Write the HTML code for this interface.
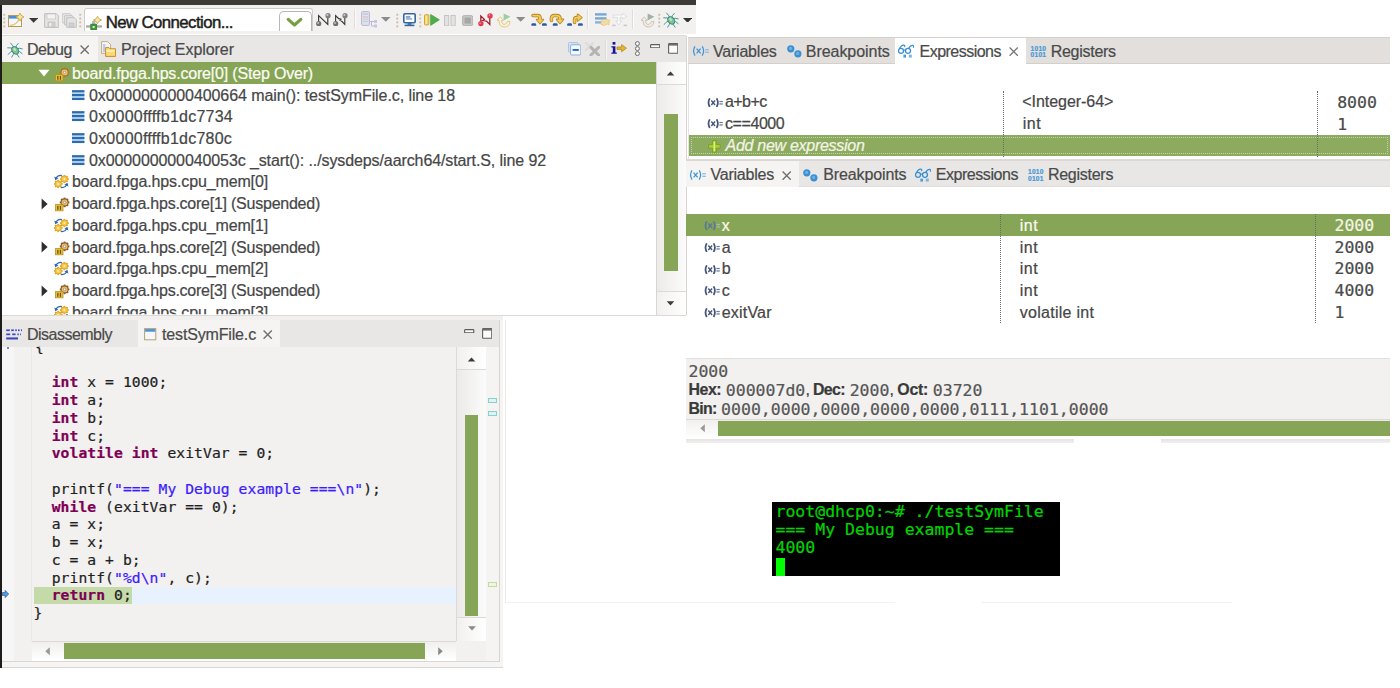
<!DOCTYPE html>
<html><head><meta charset="utf-8"><title>Debug session</title>
<style>
html,body{margin:0;padding:0;background:#fff;}
body{width:1400px;height:688px;position:relative;overflow:hidden;}
#root>div,#root>span,#root>svg{position:absolute;}
#root>span{white-space:pre;-webkit-text-stroke:0.22px;}
.k{color:#7f0055;font-weight:bold;}
.s{color:#3c1cff;}
</style></head><body><div id="root">
<div style="left:0px;top:0px;width:696px;height:4.5px;background:#3c3b37;"></div>
<div style="left:0px;top:4.5px;width:1.6px;height:663px;background:#1c1c1c;"></div>
<div style="left:1.6px;top:4.5px;width:694.4px;height:29.5px;background:#f2f1f0;"></div>
<div style="left:1.6px;top:34.6px;width:684.4px;height:1px;background:#dcd9d6;"></div>
<div style="left:84px;top:8px;width:229px;height:22.5px;background:#ffffff;border:1px solid #d0cecb;border-bottom:none;box-sizing:border-box;border-radius:3px 3px 0 0;"></div>
<div style="left:279px;top:10.5px;width:32.5px;height:20px;background:#ffffff;border:1px solid #b9b7b3;border-bottom:none;box-sizing:border-box;border-radius:5px 5px 0 0;"></div>
<svg style="left:286px;top:17px" width="17" height="11" viewBox="0 0 17 11"><path d="M2.2 2.4 L8.5 8 L14.8 2.4" fill="none" stroke="#76a03c" stroke-width="3.1" stroke-linecap="round" stroke-linejoin="round"/></svg>
<div style="left:1.6px;top:35.6px;width:684.4px;height:26.7px;background:#e9e7e5;"></div>
<div style="left:1.6px;top:35.6px;width:96px;height:26.7px;background:#f5f4f3;"></div>
<div style="left:1.6px;top:62px;width:654px;height:253px;background:#ffffff;"></div>
<div style="left:1.6px;top:62.3px;width:654px;height:21.4px;background:#87a556;"></div>
<div style="left:656px;top:62px;width:29.6px;height:252.8px;background:linear-gradient(to right,#eceae8,#fbfbfb);"></div>
<div style="left:656px;top:62px;width:29.6px;height:23px;background:linear-gradient(to right,#f1f0ee,#ffffff);border-bottom:1px solid #dcdad8;box-sizing:border-box;"></div>
<div style="left:656px;top:291.4px;width:29.6px;height:23.4px;background:linear-gradient(to right,#f1f0ee,#ffffff);border-top:1px solid #dcdad8;box-sizing:border-box;"></div>
<div style="left:655.5px;top:62px;width:1px;height:253px;background:#d8d6d3;"></div>
<div style="left:664.3px;top:113.8px;width:13.4px;height:157px;background:#87a556;"></div>
<svg style="left:666.4px;top:71.4px" width="9" height="5"><path d="M0.7 4.6 L4.5 0.5 L8.3 4.6 Z" fill="#3c3c3c"/></svg>
<svg style="left:666.4px;top:301px" width="9" height="5"><path d="M0.7 0.3 L4.5 4.4 L8.3 0.3 Z" fill="#3c3c3c"/></svg>
<svg style="left:38px;top:69px" width="12" height="8"><path d="M0.5 0.8 L11.5 0.8 L6 7.5 Z" fill="#ffffff"/></svg>
<svg style="left:41px;top:197.8px" width="7" height="12"><path d="M0.6 0.5 L6.6 6 L0.6 11.5 Z" fill="#2e2e2e"/></svg>
<svg style="left:41px;top:241.2px" width="7" height="12"><path d="M0.6 0.5 L6.6 6 L0.6 11.5 Z" fill="#2e2e2e"/></svg>
<svg style="left:41px;top:284.6px" width="7" height="12"><path d="M0.6 0.5 L6.6 6 L0.6 11.5 Z" fill="#2e2e2e"/></svg>
<div style="left:1.6px;top:320.3px;width:498px;height:26.4px;background:#e9e7e5;"></div>
<div style="left:138px;top:320.3px;width:142px;height:26.4px;background:#f5f4f3;"></div>
<div style="left:1.6px;top:346.7px;width:498px;height:314.6px;background:#f2f1f0;"></div>
<div style="left:1.6px;top:346.7px;width:12.4px;height:314.6px;background:#f7f6f6;"></div>
<div style="left:31px;top:346.7px;width:1px;height:294px;background:#e9e8e6;"></div>
<div style="left:456.3px;top:346.7px;width:1px;height:294px;background:#dcdad8;"></div>
<div style="left:34px;top:586.6px;width:422.3px;height:17.4px;background:#e8f2fe;"></div>
<div style="left:34px;top:586.6px;width:98.1px;height:17.4px;background:#c4dba9;"></div>
<div style="left:457.3px;top:346.7px;width:29px;height:294px;background:linear-gradient(to right,#eceae8,#fbfbfb);"></div>
<div style="left:457.3px;top:346.7px;width:29px;height:23.5px;background:linear-gradient(to right,#f1f0ee,#ffffff);border-bottom:1px solid #dcdad8;box-sizing:border-box;"></div>
<div style="left:457.3px;top:616.5px;width:29px;height:24px;background:linear-gradient(to right,#f1f0ee,#ffffff);border-top:1px solid #dcdad8;box-sizing:border-box;"></div>
<div style="left:465px;top:415.2px;width:13px;height:201px;background:#87a556;"></div>
<svg style="left:467.2px;top:356.6px" width="9" height="5"><path d="M0.7 4.6 L4.5 0.5 L8.3 4.6 Z" fill="#3c3c3c"/></svg>
<svg style="left:467.8px;top:626.2px" width="8" height="5"><path d="M0.2 0.2 L4 4.5 L7.8 0.2 Z" fill="#8a8888"/></svg>
<div style="left:486.3px;top:346.7px;width:13.5px;height:314.6px;background:#f5f4f3;"></div>
<div style="left:488.2px;top:398.4px;width:8.8px;height:5px;background:#dff3f3;border:1px solid #84d0d2;box-sizing:border-box;"></div>
<div style="left:488.2px;top:411.2px;width:8.8px;height:5px;background:#dff3f3;border:1px solid #84d0d2;box-sizing:border-box;"></div>
<div style="left:488.2px;top:582.4px;width:8.8px;height:5px;background:#eef6e2;border:1px solid #c2dca6;box-sizing:border-box;"></div>
<div style="left:32px;top:640.5px;width:424.3px;height:20.8px;background:linear-gradient(to bottom,#eceae8,#fbfbfb);border-top:1px solid #dcdad8;box-sizing:border-box;"></div>
<div style="left:32px;top:641.5px;width:31.5px;height:19.8px;background:linear-gradient(to bottom,#f1f0ee,#ffffff);"></div>
<div style="left:425px;top:641.5px;width:31.3px;height:19.8px;background:linear-gradient(to bottom,#f1f0ee,#ffffff);"></div>
<div style="left:64px;top:643px;width:361px;height:15.6px;background:#87a556;"></div>
<svg style="left:45.4px;top:647px" width="5" height="9"><path d="M4.8 0.3 L0.3 4.3 L4.8 8.3 Z" fill="#9a9898"/></svg>
<svg style="left:438.4px;top:647px" width="5" height="9"><path d="M0.2 0.3 L4.7 4.3 L0.2 8.3 Z" fill="#8a8888"/></svg>
<div style="left:499.3px;top:320.3px;width:1px;height:341.5px;background:#d6d3d0;"></div>
<div style="left:500.3px;top:320.3px;width:2.9px;height:347.3px;background:#f6f5f4;"></div>
<div style="left:1.6px;top:661.3px;width:501.6px;height:6.3px;background:#f6f5f4;border-bottom:1.4px solid #d8d5d2;box-sizing:border-box;"></div>
<div style="left:1.6px;top:661.4px;width:498.4px;height:1px;background:#d9d6d3;"></div>
<div style="left:505.3px;top:320px;width:1px;height:282px;background:#ecebea;"></div>
<div style="left:688.3px;top:37.2px;width:701.7px;height:26.8px;background:#e2dfdc;border-top:1px solid #d3d0cc;border-bottom:1px solid #d3d0cc;box-sizing:border-box;"></div>
<div style="left:894.8px;top:37.6px;width:131.2px;height:27px;background:#ffffff;"></div>
<div style="left:685.6px;top:35.6px;width:1px;height:279.2px;background:#d9d3cf;"></div>
<div style="left:688.6px;top:134.6px;width:701.4px;height:21.2px;background:#8dab5f;outline:1px dotted #c4d4aa;outline-offset:-3px;"></div>
<div style="left:1003px;top:91px;width:1px;height:65.5px;background:transparent;border-left:1px dotted #6a6a6a;"></div>
<div style="left:1317.4px;top:91px;width:1px;height:65.5px;background:transparent;border-left:1px dotted #6a6a6a;"></div>
<div style="left:688.2px;top:64px;width:1px;height:95.5px;background:#e6e4e2;"></div>
<div style="left:686px;top:159.2px;width:704px;height:1px;background:#dedbd8;"></div>
<div style="left:686px;top:160px;width:704px;height:27px;background:#e9e7e5;border-top:1px solid #ddd7d4;border-bottom:1px solid #dfdcd9;box-sizing:border-box;"></div>
<div style="left:686px;top:160.6px;width:113.2px;height:26.4px;background:#f5f4f3;"></div>
<div style="left:686px;top:214.3px;width:704px;height:21.3px;background:#87a556;"></div>
<div style="left:1000px;top:214.3px;width:1px;height:109px;background:transparent;border-left:1px dotted #6a6a6a;"></div>
<div style="left:1314.7px;top:214.3px;width:1px;height:109px;background:transparent;border-left:1px dotted #6a6a6a;"></div>
<div style="left:686px;top:358px;width:704px;height:61px;background:#f2f1f0;border-top:1px solid #e2e0de;box-sizing:border-box;"></div>
<div style="left:686px;top:418.5px;width:704px;height:20.5px;background:linear-gradient(to bottom,#eceae8,#ffffff);border-top:1px solid #dcdad8;box-sizing:border-box;"></div>
<div style="left:686px;top:439px;width:388px;height:3.5px;background:linear-gradient(to bottom,#e6e4e2,#f1f0ef);"></div>
<div style="left:1161px;top:439px;width:229px;height:3.5px;background:linear-gradient(to bottom,#e6e4e2,#f1f0ef);"></div>
<div style="left:686px;top:419.5px;width:31.3px;height:19.5px;background:linear-gradient(to bottom,#f1f0ee,#ffffff);"></div>
<div style="left:717.5px;top:421px;width:672.5px;height:15.3px;background:#87a556;"></div>
<svg style="left:699.6px;top:424.4px" width="5" height="9"><path d="M4.8 0.3 L0.3 4.3 L4.8 8.3 Z" fill="#9a9898"/></svg>
<div style="left:772px;top:502px;width:288px;height:74.2px;background:#000000;"></div>
<div style="left:775.5px;top:558.1px;width:9.7px;height:18.1px;background:#00ff00;"></div>
<div style="left:505px;top:601.5px;width:390px;height:1px;background:#f1f1f1;"></div>
<div style="left:981px;top:601.5px;width:251px;height:1px;background:#f1f1f1;"></div>
<svg style="left:3px;top:12.5px" width="3" height="16"><rect x="0.3" y="0.8" width="1.9" height="1.9" fill="#cdbfa6"/><rect x="0.3" y="4.6" width="1.9" height="1.9" fill="#cdbfa6"/><rect x="0.3" y="8.4" width="1.9" height="1.9" fill="#cdbfa6"/><rect x="0.3" y="12.4" width="1.9" height="1.9" fill="#cdbfa6"/></svg>
<svg style="left:8px;top:13px" width="16" height="15" viewBox="0 0 16 15"><rect x="0.5" y="2.5" width="13" height="11" fill="#f4f8fc" stroke="#b89a58" stroke-width="1"/><rect x="1" y="3" width="12" height="2.6" fill="#4a90d8"/><path d="M2 12.5 Q9 12 11.5 5" stroke="#e8c870" stroke-width="1.3" fill="none"/><path d="M12 0 L13.4 2.6 L16 4 L13.4 5.4 L12 8 L10.6 5.4 L8 4 L10.6 2.6 Z" fill="#f6e6a0" stroke="#c8a040" stroke-width="0.8"/></svg>
<svg style="left:28.5px;top:18px" width="9.2" height="4.8"><path d="M0 0 L9.2 0 L4.6 4.8 Z" fill="#3a3a3a"/></svg>
<svg style="left:44px;top:13px" width="15" height="15" viewBox="0 0 15 15"><path d="M0.7 0.7 H12.3 L14.3 2.7 V14.3 H0.7 Z" fill="#e6e6e6" stroke="#bcbcbc" stroke-width="1"/><rect x="3" y="1" width="8.5" height="5" fill="#f4f4f4" stroke="#c4c4c4" stroke-width="0.7"/><rect x="4" y="9" width="7" height="5" fill="#d0d0d0" stroke="#bcbcbc" stroke-width="0.7"/><rect x="5.2" y="10" width="2" height="3.4" fill="#f0f0f0"/></svg>
<svg style="left:62px;top:13px" width="15" height="15" viewBox="0 0 15 15"><path d="M0.7 0.7 H8 L10 2.7 V10 H0.7 Z" fill="#ececec" stroke="#c4c4c4" stroke-width="0.9"/><path d="M2.7 2.7 H10 L12 4.7 V12 H2.7 Z" fill="#e8e8e8" stroke="#c0c0c0" stroke-width="0.9"/><path d="M4.7 4.7 H12.3 L14.3 6.7 V14.3 H4.7 Z" fill="#e4e4e4" stroke="#bcbcbc" stroke-width="0.9"/><rect x="7" y="10" width="5" height="4" fill="#d0d0d0" stroke="#bcbcbc" stroke-width="0.6"/></svg>
<svg style="left:79px;top:12.5px" width="3" height="16"><rect x="0.3" y="0.8" width="1.9" height="1.9" fill="#cdbfa6"/><rect x="0.3" y="4.6" width="1.9" height="1.9" fill="#cdbfa6"/><rect x="0.3" y="8.4" width="1.9" height="1.9" fill="#cdbfa6"/><rect x="0.3" y="12.4" width="1.9" height="1.9" fill="#cdbfa6"/></svg>
<svg style="left:86px;top:15.5px" width="16.5" height="14" viewBox="0 0 16.5 14"><rect x="0" y="9.3" width="16" height="2.3" fill="#a8a8a8"/><rect x="6" y="5" width="3.4" height="5" fill="#b8b8b8"/><rect x="4.8" y="8.2" width="5.6" height="5.4" fill="#3f9a3a" stroke="#2a7a28" stroke-width="0.8"/><rect x="6.6" y="10" width="2" height="2" fill="#d8f0c8"/><path d="M11.5 0.3 L13 2.8 L15.6 4 L13 5.2 L11.5 7.7 L10 5.2 L7.4 4 L10 2.8 Z" fill="#f6e8a8" stroke="#c8a040" stroke-width="0.8"/></svg>
<svg style="left:315.6px;top:12.5px" width="15" height="13.5" viewBox="0 0 15 13.5"><path d="M2.6 10.4 V2.6 L11.8 11.4 V2.4" stroke="#3a3a3a" stroke-width="1.15" fill="none"/><circle cx="2.7" cy="10.7" r="2.6" fill="#707070"/><circle cx="2.1" cy="10" r="1.1" fill="#b8b8b8"/><circle cx="12" cy="2.7" r="2.6" fill="#808080"/><circle cx="11.4" cy="2" r="1.1" fill="#cccccc"/></svg>
<svg style="left:333px;top:12.5px" width="15" height="13.5" viewBox="0 0 15 13.5"><path d="M2.6 10.4 V2.6 L6 6 M8.5 8 L11.8 11.4 V2.4" stroke="#3a3a3a" stroke-width="1.1" fill="none"/><path d="M5.4 5.2 L8.4 6.2 L6.4 7 L9 8.6" stroke="#3a3a3a" stroke-width="0.9" fill="none"/><circle cx="2.7" cy="10.7" r="2.6" fill="#707070"/><circle cx="2.1" cy="10" r="1.1" fill="#b8b8b8"/><circle cx="12" cy="2.7" r="2.6" fill="#808080"/><circle cx="11.4" cy="2" r="1.1" fill="#cccccc"/></svg>
<div style="left:353.5px;top:9px;width:1px;height:20px;background:#e0deda;"></div>
<div style="left:354.5px;top:9px;width:1px;height:20px;background:#fbfaf9;"></div>
<svg style="left:361px;top:10.5px" width="17" height="17" viewBox="0 0 17 17"><rect x="0.6" y="0.6" width="7.8" height="13.8" rx="1" fill="#dfe2ee" stroke="#aeb4cc" stroke-width="0.9"/><rect x="2" y="2" width="5" height="2" fill="#c8cfe2"/><rect x="2" y="5.4" width="5" height="1.2" fill="#e8b8c0"/><rect x="2" y="7.6" width="5" height="1.2" fill="#c0d8d0"/><rect x="2" y="9.8" width="5" height="1.2" fill="#c8cfe2"/><path d="M8.4 10.5 H14 M10.5 10.5 V15 H14" stroke="#b8b8d8" stroke-width="1" fill="none"/><rect x="13" y="9" width="3" height="3" fill="#c8c4e4"/><rect x="13" y="13.5" width="3" height="3" fill="#c8c4e4"/></svg>
<svg style="left:381.4px;top:17.2px" width="9.6" height="4.8"><path d="M0 0 L9.6 0 L4.8 4.8 Z" fill="#8c8c8c"/></svg>
<svg style="left:396.3px;top:12.5px" width="3" height="16"><rect x="0.3" y="0.8" width="1.9" height="1.9" fill="#cdbfa6"/><rect x="0.3" y="4.6" width="1.9" height="1.9" fill="#cdbfa6"/><rect x="0.3" y="8.4" width="1.9" height="1.9" fill="#cdbfa6"/><rect x="0.3" y="12.4" width="1.9" height="1.9" fill="#cdbfa6"/></svg>
<svg style="left:403px;top:12.5px" width="13" height="14" viewBox="0 0 13 14"><rect x="0.8" y="0.8" width="11.4" height="9" rx="1.2" fill="#ffffff" stroke="#3465a4" stroke-width="1.6"/><rect x="2.8" y="3.4" width="4.6" height="1.1" fill="#3465a4"/><rect x="2.8" y="5.4" width="6.4" height="1.1" fill="#5a86c0"/><rect x="4.6" y="10.2" width="3.8" height="1.6" fill="#3465a4"/><rect x="1.6" y="11.6" width="9.8" height="1.6" fill="#3465a4"/></svg>
<svg style="left:419.3px;top:12.5px" width="3" height="16"><rect x="0.3" y="0.8" width="1.9" height="1.9" fill="#cdbfa6"/><rect x="0.3" y="4.6" width="1.9" height="1.9" fill="#cdbfa6"/><rect x="0.3" y="8.4" width="1.9" height="1.9" fill="#cdbfa6"/><rect x="0.3" y="12.4" width="1.9" height="1.9" fill="#cdbfa6"/></svg>
<svg style="left:424.4px;top:14.3px" width="16" height="12" viewBox="0 0 16 12"><rect x="0.5" y="0.7" width="4.4" height="10.2" rx="0.8" fill="#f2d060" stroke="#c8a030" stroke-width="0.9"/><rect x="1.6" y="1.8" width="1.3" height="8" fill="#faeaa0"/><path d="M6.6 0.4 L15.4 5.8 L6.6 11.4 Z" fill="#4cae4c" stroke="#3a943a" stroke-width="0.6"/></svg>
<svg style="left:444px;top:14.6px" width="12" height="11.5" viewBox="0 0 12 11.5"><rect x="0.5" y="0.5" width="4.2" height="10.4" fill="#e2e2e2" stroke="#c2c2c2" stroke-width="0.9"/><rect x="7" y="0.5" width="4.2" height="10.4" fill="#e2e2e2" stroke="#c2c2c2" stroke-width="0.9"/></svg>
<svg style="left:462px;top:14.8px" width="11.4" height="11.2" viewBox="0 0 11.4 11.2"><rect x="0.6" y="0.6" width="10.2" height="10" rx="1.6" fill="#c6c6c6" stroke="#b2b2b2" stroke-width="1"/><rect x="2.6" y="2.6" width="6.2" height="6" fill="#a6a6a6"/></svg>
<svg style="left:477.8px;top:13px" width="15" height="13.6" viewBox="0 0 15 13.6"><path d="M2.8 10.6 V3 L6.4 6.4 L5 7.4 L8.4 8 L11.8 11.4 V2.6" stroke="#a02030" stroke-width="1.3" fill="none"/><circle cx="2.9" cy="10.6" r="2.7" fill="#e6394f"/><circle cx="12" cy="2.9" r="2.7" fill="#e6394f"/><circle cx="2.2" cy="10.2" r="0.8" fill="#f8a0a8"/><circle cx="11.4" cy="2.1" r="0.8" fill="#f8a0a8"/></svg>
<svg style="left:496px;top:12.6px" width="15.5" height="15.2" viewBox="0 0 15.5 15.2"><path d="M1 7.2 L4.3 4 L7.6 7.2 H5.6 Q5.6 11.4 8.2 11.4 Q11.2 11.4 11.4 8.4 L14 8.4 Q13.6 14 8.2 14 Q3 14 3 7.2 Z" fill="#fcf4dc" stroke="#e2c27c" stroke-width="0.9"/><path d="M7.6 0.4 L14.4 3.8 L7.6 7.4 Z" fill="#98d0a0"/></svg>
<svg style="left:516.2px;top:17.4px" width="9.4" height="4.8"><path d="M0 0 L9.4 0 L4.7 4.8 Z" fill="#8c8c8c"/></svg>
<svg style="left:531px;top:13.4px" width="16.4" height="13" viewBox="0 0 16.4 13"><path d="M2 2.6 H6.6 Q9 2.6 9 5 V7" stroke="#b8841c" stroke-width="3.5" fill="none" stroke-linecap="round" stroke-linejoin="round"/><path d="M5.6 6.6 H12.4 L9 10.6 Z" fill="#b8841c" stroke="#b8841c" stroke-width="1.6" stroke-linejoin="round"/><path d="M2 2.6 H6.6 Q9 2.6 9 5 V7" stroke="#f0cc5c" stroke-width="1.9" fill="none" stroke-linecap="round" stroke-linejoin="round"/><path d="M5.6 6.6 H12.4 L9 10.6 Z" fill="#f0cc5c"/><path d="M0.4 12.8 V11.6 Q0.4 10.2 1.7999999999999998 10.2 H3.8 Q5.2 10.2 5.2 11.6 V12.8 Z" fill="#2a5aa4"/><path d="M11 12.8 V11.6 Q11 10.2 12.4 10.2 H14.4 Q15.8 10.2 15.8 11.6 V12.8 Z" fill="#2a5aa4"/></svg>
<svg style="left:549px;top:13.4px" width="16.4" height="13" viewBox="0 0 16.4 13"><path d="M2.4 7.6 V5.6 Q2.4 2.6 5.4 2.6 H7.6 Q11 2.6 11 5.6 V6.6" stroke="#b8841c" stroke-width="3.5" fill="none" stroke-linecap="round" stroke-linejoin="round"/><path d="M7.6 6.4 H14.4 L11 10.4 Z" fill="#b8841c" stroke="#b8841c" stroke-width="1.6" stroke-linejoin="round"/><path d="M2.4 7.6 V5.6 Q2.4 2.6 5.4 2.6 H7.6 Q11 2.6 11 5.6 V6.6" stroke="#f0cc5c" stroke-width="1.9" fill="none" stroke-linecap="round" stroke-linejoin="round"/><path d="M7.6 6.4 H14.4 L11 10.4 Z" fill="#f0cc5c"/><path d="M3.8 12.8 V11.6 Q3.8 10.2 5.199999999999999 10.2 H7.199999999999999 Q8.6 10.2 8.6 11.6 V12.8 Z" fill="#2a5aa4"/></svg>
<svg style="left:566.6px;top:13.4px" width="16.4" height="13" viewBox="0 0 16.4 13"><path d="M7.6 9.4 V6.6 Q7.6 4.6 9.6 4.6 H11" stroke="#b8841c" stroke-width="3.5" fill="none" stroke-linecap="round" stroke-linejoin="round"/><path d="M10.6 1.2 L14.8 4.6 L10.6 8 Z" fill="#b8841c" stroke="#b8841c" stroke-width="1.6" stroke-linejoin="round"/><path d="M7.6 9.4 V6.6 Q7.6 4.6 9.6 4.6 H11" stroke="#f0cc5c" stroke-width="1.9" fill="none" stroke-linecap="round" stroke-linejoin="round"/><path d="M10.6 1.2 L14.8 4.6 L10.6 8 Z" fill="#f0cc5c"/><path d="M0.2 12.8 V11.6 Q0.2 10.2 1.5999999999999999 10.2 H3.6 Q5.0 10.2 5.0 11.6 V12.8 Z" fill="#2a5aa4"/><path d="M11 12.8 V11.6 Q11 10.2 12.4 10.2 H14.4 Q15.8 10.2 15.8 11.6 V12.8 Z" fill="#2a5aa4"/></svg>
<div style="left:587px;top:9px;width:1px;height:20px;background:#e0deda;"></div>
<div style="left:588px;top:9px;width:1px;height:20px;background:#fbfaf9;"></div>
<svg style="left:595px;top:12.8px" width="15.4" height="14.6" viewBox="0 0 15.4 14.6"><rect x="0" y="0.2" width="11.6" height="2.4" fill="#7aa6d4"/><rect x="0" y="4.2" width="11.6" height="2.4" fill="#7aa6d4"/><rect x="0" y="8.2" width="6.6" height="2.4" fill="#8ab2dc"/><path d="M6.4 7.4 Q9 9.6 10.6 7 L9.8 6 L14.6 7.2 L13.6 12.2 L12.6 10.8 Q9.6 14 6 11.4 Z" fill="#f6dca0" stroke="#e4c078" stroke-width="0.7"/></svg>
<svg style="left:611.6px;top:13px" width="16.4" height="14" viewBox="0 0 16.4 14"><path d="M1 2 H10.6 V0.4 L15 3.2 L10.6 6 V4.4 H8 V8.4 H9.6 L6.8 12 L4 8.4 H5.6 V4.4 H1 Z" fill="#fafafa" stroke="#d8d8d8" stroke-width="0.8"/><rect x="0.2" y="11.6" width="3.4" height="1.6" fill="#c8c8c8"/><rect x="11.6" y="11.6" width="3.4" height="1.6" fill="#c8c8c8"/></svg>
<div style="left:632.2px;top:9px;width:1px;height:20px;background:#e0deda;"></div>
<div style="left:633.2px;top:9px;width:1px;height:20px;background:#fbfaf9;"></div>
<svg style="left:640px;top:12.6px" width="15.5" height="15.2" viewBox="0 0 15.5 15.2"><path d="M1 7.2 L4.3 4 L7.6 7.2 H5.6 Q5.6 11.4 8.2 11.4 Q11.2 11.4 11.4 8.4 L14 8.4 Q13.6 14 8.2 14 Q3 14 3 7.2 Z" fill="#f0ece4" stroke="#c8c0b0" stroke-width="0.9"/><path d="M7.6 0.4 L14.4 3.8 L7.6 7.4 Z" fill="#9cb4a4"/></svg>
<svg style="left:657.5px;top:12.5px" width="3" height="16"><rect x="0.3" y="0.8" width="1.9" height="1.9" fill="#cdbfa6"/><rect x="0.3" y="4.6" width="1.9" height="1.9" fill="#cdbfa6"/><rect x="0.3" y="8.4" width="1.9" height="1.9" fill="#cdbfa6"/><rect x="0.3" y="12.4" width="1.9" height="1.9" fill="#cdbfa6"/></svg>
<svg style="left:662.6px;top:12.4px" width="16.0" height="16.0" viewBox="0 0 16 16"><path d="M8 8 L3.86 5.93 L0.70 5.81" stroke="#3a8c86" stroke-width="1.0" stroke-linecap="round" fill="none" opacity="0.9"/><path d="M8 8 L5.93 3.86 L3.62 1.07" stroke="#3a8c86" stroke-width="1.0" stroke-linecap="round" fill="none" opacity="0.9"/><path d="M8 8 L9.38 3.63 L11.29 1.43" stroke="#3a8c86" stroke-width="1.0" stroke-linecap="round" fill="none" opacity="0.9"/><path d="M8 8 L12.14 6.16 L15.30 6.91" stroke="#3a8c86" stroke-width="1.0" stroke-linecap="round" fill="none" opacity="0.9"/><path d="M8 8 L12.37 9.38 L15.15 11.65" stroke="#3a8c86" stroke-width="1.0" stroke-linecap="round" fill="none" opacity="0.9"/><path d="M8 8 L10.07 12.14 L12.02 15.15" stroke="#3a8c86" stroke-width="1.0" stroke-linecap="round" fill="none" opacity="0.9"/><path d="M8 8 L6.39 12.37 L4.71 15.15" stroke="#3a8c86" stroke-width="1.0" stroke-linecap="round" fill="none" opacity="0.9"/><path d="M8 8 L3.86 9.84 L1.07 12.38" stroke="#3a8c86" stroke-width="1.0" stroke-linecap="round" fill="none" opacity="0.9"/><ellipse cx="8.2" cy="8.4" rx="3.6" ry="4.6" transform="rotate(-38 8.2 8.4)" fill="#2c8896"/><ellipse cx="8.2" cy="8.4" rx="2.6" ry="3.6" transform="rotate(-38 8.2 8.4)" fill="#86c486"/><ellipse cx="7.6" cy="7.4" rx="1.1" ry="1.7" transform="rotate(-38 7.6 7.4)" fill="#c4e6be"/></svg>
<svg style="left:683.2px;top:17.7px" width="9.2" height="4.8"><path d="M0 0 L9.2 0 L4.6 4.8 Z" fill="#333"/></svg>
<svg style="left:6.8px;top:42px" width="16.0" height="16.0" viewBox="0 0 16 16"><path d="M8 8 L3.86 5.93 L0.70 5.81" stroke="#3a8c86" stroke-width="1.0" stroke-linecap="round" fill="none" opacity="0.9"/><path d="M8 8 L5.93 3.86 L3.62 1.07" stroke="#3a8c86" stroke-width="1.0" stroke-linecap="round" fill="none" opacity="0.9"/><path d="M8 8 L9.38 3.63 L11.29 1.43" stroke="#3a8c86" stroke-width="1.0" stroke-linecap="round" fill="none" opacity="0.9"/><path d="M8 8 L12.14 6.16 L15.30 6.91" stroke="#3a8c86" stroke-width="1.0" stroke-linecap="round" fill="none" opacity="0.9"/><path d="M8 8 L12.37 9.38 L15.15 11.65" stroke="#3a8c86" stroke-width="1.0" stroke-linecap="round" fill="none" opacity="0.9"/><path d="M8 8 L10.07 12.14 L12.02 15.15" stroke="#3a8c86" stroke-width="1.0" stroke-linecap="round" fill="none" opacity="0.9"/><path d="M8 8 L6.39 12.37 L4.71 15.15" stroke="#3a8c86" stroke-width="1.0" stroke-linecap="round" fill="none" opacity="0.9"/><path d="M8 8 L3.86 9.84 L1.07 12.38" stroke="#3a8c86" stroke-width="1.0" stroke-linecap="round" fill="none" opacity="0.9"/><ellipse cx="8.2" cy="8.4" rx="3.6" ry="4.6" transform="rotate(-38 8.2 8.4)" fill="#2c8896"/><ellipse cx="8.2" cy="8.4" rx="2.6" ry="3.6" transform="rotate(-38 8.2 8.4)" fill="#86c486"/><ellipse cx="7.6" cy="7.4" rx="1.1" ry="1.7" transform="rotate(-38 7.6 7.4)" fill="#c4e6be"/></svg>
<svg style="left:80px;top:45.2px" width="9.4" height="9.4"><path d="M0.6 0.6 L8.8 8.8 M8.8 0.6 L0.6 8.8" stroke="#6f6f6f" stroke-width="1.35" fill="none"/></svg>
<svg style="left:101px;top:41px" width="15.4" height="16" viewBox="0 0 15.4 16"><path d="M0.6 0.6 H6.6 L9.6 3.6 V12.4 H0.6 Z" fill="#f4f6fc" stroke="#c4ae72" stroke-width="1"/><rect x="2" y="3" width="2.4" height="8" fill="#b8ccf0"/><path d="M4.6 6.6 H8 L9 7.8 H14.6 V15.4 H4.6 Z" fill="#fcd870" stroke="#c88a30" stroke-width="1"/><rect x="5.4" y="8.6" width="8.4" height="2.4" fill="#fff0a8"/></svg>
<svg style="left:568px;top:42px" width="13.4" height="13.6" viewBox="0 0 13.4 13.6"><rect x="0.5" y="0.5" width="9.6" height="9.6" rx="1" fill="#cfe0f4" stroke="#a8c4e4" stroke-width="0.9"/><rect x="2.6" y="2.8" width="10.2" height="10.2" rx="1" fill="#f4f8fd" stroke="#8ab0dc" stroke-width="1"/><rect x="4.6" y="7" width="6.2" height="1.9" fill="#2a68b4"/></svg>
<svg style="left:585px;top:41.6px" width="15.4" height="14.4" viewBox="0 0 15.4 14.4"><path d="M1 1 L8 8 M8 1 L1 8" stroke="#dcdcdc" stroke-width="2.4" stroke-linecap="round"/><path d="M6 5.4 L13.6 13 M13.6 5.4 L6 13" stroke="#b4b4b4" stroke-width="3" stroke-linecap="round"/></svg>
<div style="left:605.3px;top:39.5px;width:1px;height:20px;background:#dedcd9;"></div>
<div style="left:606.3px;top:39.5px;width:1px;height:20px;background:#f6f5f4;"></div>
<svg style="left:611.4px;top:42px" width="16" height="12.4" viewBox="0 0 16 12.4"><rect x="1.6" y="0" width="2.8" height="2.6" fill="#14149c"/><path d="M0.4 4.2 H4.4 V10.4 H5.8 V11.8 H0.4 V10.4 H1.8 V5.6 H0.4 Z" fill="#14149c"/><path d="M6 5 H10.6 V2.6 L15.4 6.2 L10.6 9.8 V7.4 H6 Z" fill="#e4b828" stroke="#a8801c" stroke-width="0.7"/></svg>
<svg style="left:634.2px;top:41.2px" width="7" height="15.4" viewBox="0 0 7 15.4"><circle cx="3.4" cy="2.6" r="2" fill="#f4f4f4" stroke="#6c6c6c" stroke-width="1"/><circle cx="3.4" cy="7.6" r="2" fill="#f4f4f4" stroke="#6c6c6c" stroke-width="1"/><circle cx="3.4" cy="12.6" r="2" fill="#f4f4f4" stroke="#6c6c6c" stroke-width="1"/></svg>
<svg style="left:650px;top:43.8px" width="10.4" height="4.4" viewBox="0 0 10.4 4.4"><rect x="0.6" y="0.6" width="9.2" height="3.2" rx="0.6" fill="#fbfbfb" stroke="#5c5c5c" stroke-width="1.1"/></svg>
<svg style="left:667.8px;top:43.0px" width="10.4" height="10.8" viewBox="0 0 10.4 10.8"><rect x="0.6" y="0.6" width="9.2" height="9.6" rx="0.6" fill="#fbfbfb" stroke="#5c5c5c" stroke-width="1.1"/><rect x="0.6" y="0.6" width="9.2" height="2" fill="#6c6c6c"/></svg>
<svg style="left:464.2px;top:328.79999999999995px" width="10.4" height="4.4" viewBox="0 0 10.4 4.4"><rect x="0.6" y="0.6" width="9.2" height="3.2" rx="0.6" fill="#fbfbfb" stroke="#5c5c5c" stroke-width="1.1"/></svg>
<svg style="left:482.0px;top:328.0px" width="10.4" height="10.8" viewBox="0 0 10.4 10.8"><rect x="0.6" y="0.6" width="9.2" height="9.6" rx="0.6" fill="#fbfbfb" stroke="#5c5c5c" stroke-width="1.1"/><rect x="0.6" y="0.6" width="9.2" height="2" fill="#6c6c6c"/></svg>
<svg style="left:54.6px;top:67.0px" width="15" height="15" viewBox="0 0 15 15"><g transform="translate(9.6 5.4)"><rect x="-0.9" y="-4.8" width="1.8" height="1.8" fill="#a87828" transform="rotate(0)"/><rect x="-0.9" y="-4.8" width="1.8" height="1.8" fill="#a87828" transform="rotate(45)"/><rect x="-0.9" y="-4.8" width="1.8" height="1.8" fill="#a87828" transform="rotate(90)"/><rect x="-0.9" y="-4.8" width="1.8" height="1.8" fill="#a87828" transform="rotate(135)"/><rect x="-0.9" y="-4.8" width="1.8" height="1.8" fill="#a87828" transform="rotate(180)"/><rect x="-0.9" y="-4.8" width="1.8" height="1.8" fill="#a87828" transform="rotate(225)"/><rect x="-0.9" y="-4.8" width="1.8" height="1.8" fill="#a87828" transform="rotate(270)"/><rect x="-0.9" y="-4.8" width="1.8" height="1.8" fill="#a87828" transform="rotate(315)"/><circle r="3.5" fill="#f0c868" stroke="#a87828" stroke-width="1.1"/><circle r="1.3" fill="#f8f0e0" stroke="#7a6a8a" stroke-width="0.6"/></g><rect x="0.4" y="7.6" width="7.6" height="6.2" fill="#ecc23c" stroke="#b8901c" stroke-width="0.8"/><rect x="2.2" y="8.8" width="1.3" height="4" fill="#6e5410"/><rect x="4.8" y="8.8" width="1.3" height="4" fill="#6e5410"/></svg>
<svg style="left:72.4px;top:89.61px" width="13" height="11"><rect x="0" y="0" width="12.4" height="10.2" fill="#b8d4ee"/><rect x="0" y="0.2" width="12.4" height="2.1" fill="#2c6cac"/><rect x="0" y="4" width="12.4" height="2.1" fill="#2c6cac"/><rect x="0" y="7.9" width="12.4" height="2.1" fill="#2c6cac"/></svg>
<svg style="left:72.4px;top:111.32000000000001px" width="13" height="11"><rect x="0" y="0" width="12.4" height="10.2" fill="#b8d4ee"/><rect x="0" y="0.2" width="12.4" height="2.1" fill="#2c6cac"/><rect x="0" y="4" width="12.4" height="2.1" fill="#2c6cac"/><rect x="0" y="7.9" width="12.4" height="2.1" fill="#2c6cac"/></svg>
<svg style="left:72.4px;top:133.03px" width="13" height="11"><rect x="0" y="0" width="12.4" height="10.2" fill="#b8d4ee"/><rect x="0" y="0.2" width="12.4" height="2.1" fill="#2c6cac"/><rect x="0" y="4" width="12.4" height="2.1" fill="#2c6cac"/><rect x="0" y="7.9" width="12.4" height="2.1" fill="#2c6cac"/></svg>
<svg style="left:72.4px;top:154.74px" width="13" height="11"><rect x="0" y="0" width="12.4" height="10.2" fill="#b8d4ee"/><rect x="0" y="0.2" width="12.4" height="2.1" fill="#2c6cac"/><rect x="0" y="4" width="12.4" height="2.1" fill="#2c6cac"/><rect x="0" y="7.9" width="12.4" height="2.1" fill="#2c6cac"/></svg>
<svg style="left:54.4px;top:174.35000000000002px" width="15" height="15" viewBox="0 0 15 16" preserveAspectRatio="none"><path d="M1.6 5.4 Q3.4 1 8 1.6" stroke="#2a6ab4" stroke-width="1.3" fill="none"/><path d="M0.4 2.6 L1.2 6.6 L4.4 4.8 Z" fill="#2a6ab4"/><path d="M13 10.6 Q11.6 15 6.8 14.4" stroke="#2a6ab4" stroke-width="1.3" fill="none"/><path d="M14.4 13.4 L13.4 9.4 L10.4 11.4 Z" fill="#2a6ab4"/><g transform="translate(10.4 5.4)"><rect x="-0.9" y="-4.4" width="1.8" height="1.8" fill="#dca428" transform="rotate(0)"/><rect x="-0.9" y="-4.4" width="1.8" height="1.8" fill="#dca428" transform="rotate(45)"/><rect x="-0.9" y="-4.4" width="1.8" height="1.8" fill="#dca428" transform="rotate(90)"/><rect x="-0.9" y="-4.4" width="1.8" height="1.8" fill="#dca428" transform="rotate(135)"/><rect x="-0.9" y="-4.4" width="1.8" height="1.8" fill="#dca428" transform="rotate(180)"/><rect x="-0.9" y="-4.4" width="1.8" height="1.8" fill="#dca428" transform="rotate(225)"/><rect x="-0.9" y="-4.4" width="1.8" height="1.8" fill="#dca428" transform="rotate(270)"/><rect x="-0.9" y="-4.4" width="1.8" height="1.8" fill="#dca428" transform="rotate(315)"/><circle r="3.2" fill="#f6c84c" stroke="#dca428" stroke-width="0.9"/><circle r="1.1" fill="#fdeeb0"/></g><g transform="translate(4.2 10.6)"><rect x="-0.9" y="-4.4" width="1.8" height="1.8" fill="#dca428" transform="rotate(0)"/><rect x="-0.9" y="-4.4" width="1.8" height="1.8" fill="#dca428" transform="rotate(45)"/><rect x="-0.9" y="-4.4" width="1.8" height="1.8" fill="#dca428" transform="rotate(90)"/><rect x="-0.9" y="-4.4" width="1.8" height="1.8" fill="#dca428" transform="rotate(135)"/><rect x="-0.9" y="-4.4" width="1.8" height="1.8" fill="#dca428" transform="rotate(180)"/><rect x="-0.9" y="-4.4" width="1.8" height="1.8" fill="#dca428" transform="rotate(225)"/><rect x="-0.9" y="-4.4" width="1.8" height="1.8" fill="#dca428" transform="rotate(270)"/><rect x="-0.9" y="-4.4" width="1.8" height="1.8" fill="#dca428" transform="rotate(315)"/><circle r="3.2" fill="#f6c84c" stroke="#dca428" stroke-width="0.9"/><circle r="1.1" fill="#fdeeb0"/></g></svg>
<svg style="left:54.4px;top:217.77px" width="15" height="15" viewBox="0 0 15 16" preserveAspectRatio="none"><path d="M1.6 5.4 Q3.4 1 8 1.6" stroke="#2a6ab4" stroke-width="1.3" fill="none"/><path d="M0.4 2.6 L1.2 6.6 L4.4 4.8 Z" fill="#2a6ab4"/><path d="M13 10.6 Q11.6 15 6.8 14.4" stroke="#2a6ab4" stroke-width="1.3" fill="none"/><path d="M14.4 13.4 L13.4 9.4 L10.4 11.4 Z" fill="#2a6ab4"/><g transform="translate(10.4 5.4)"><rect x="-0.9" y="-4.4" width="1.8" height="1.8" fill="#dca428" transform="rotate(0)"/><rect x="-0.9" y="-4.4" width="1.8" height="1.8" fill="#dca428" transform="rotate(45)"/><rect x="-0.9" y="-4.4" width="1.8" height="1.8" fill="#dca428" transform="rotate(90)"/><rect x="-0.9" y="-4.4" width="1.8" height="1.8" fill="#dca428" transform="rotate(135)"/><rect x="-0.9" y="-4.4" width="1.8" height="1.8" fill="#dca428" transform="rotate(180)"/><rect x="-0.9" y="-4.4" width="1.8" height="1.8" fill="#dca428" transform="rotate(225)"/><rect x="-0.9" y="-4.4" width="1.8" height="1.8" fill="#dca428" transform="rotate(270)"/><rect x="-0.9" y="-4.4" width="1.8" height="1.8" fill="#dca428" transform="rotate(315)"/><circle r="3.2" fill="#f6c84c" stroke="#dca428" stroke-width="0.9"/><circle r="1.1" fill="#fdeeb0"/></g><g transform="translate(4.2 10.6)"><rect x="-0.9" y="-4.4" width="1.8" height="1.8" fill="#dca428" transform="rotate(0)"/><rect x="-0.9" y="-4.4" width="1.8" height="1.8" fill="#dca428" transform="rotate(45)"/><rect x="-0.9" y="-4.4" width="1.8" height="1.8" fill="#dca428" transform="rotate(90)"/><rect x="-0.9" y="-4.4" width="1.8" height="1.8" fill="#dca428" transform="rotate(135)"/><rect x="-0.9" y="-4.4" width="1.8" height="1.8" fill="#dca428" transform="rotate(180)"/><rect x="-0.9" y="-4.4" width="1.8" height="1.8" fill="#dca428" transform="rotate(225)"/><rect x="-0.9" y="-4.4" width="1.8" height="1.8" fill="#dca428" transform="rotate(270)"/><rect x="-0.9" y="-4.4" width="1.8" height="1.8" fill="#dca428" transform="rotate(315)"/><circle r="3.2" fill="#f6c84c" stroke="#dca428" stroke-width="0.9"/><circle r="1.1" fill="#fdeeb0"/></g></svg>
<svg style="left:54.4px;top:261.19px" width="15" height="15" viewBox="0 0 15 16" preserveAspectRatio="none"><path d="M1.6 5.4 Q3.4 1 8 1.6" stroke="#2a6ab4" stroke-width="1.3" fill="none"/><path d="M0.4 2.6 L1.2 6.6 L4.4 4.8 Z" fill="#2a6ab4"/><path d="M13 10.6 Q11.6 15 6.8 14.4" stroke="#2a6ab4" stroke-width="1.3" fill="none"/><path d="M14.4 13.4 L13.4 9.4 L10.4 11.4 Z" fill="#2a6ab4"/><g transform="translate(10.4 5.4)"><rect x="-0.9" y="-4.4" width="1.8" height="1.8" fill="#dca428" transform="rotate(0)"/><rect x="-0.9" y="-4.4" width="1.8" height="1.8" fill="#dca428" transform="rotate(45)"/><rect x="-0.9" y="-4.4" width="1.8" height="1.8" fill="#dca428" transform="rotate(90)"/><rect x="-0.9" y="-4.4" width="1.8" height="1.8" fill="#dca428" transform="rotate(135)"/><rect x="-0.9" y="-4.4" width="1.8" height="1.8" fill="#dca428" transform="rotate(180)"/><rect x="-0.9" y="-4.4" width="1.8" height="1.8" fill="#dca428" transform="rotate(225)"/><rect x="-0.9" y="-4.4" width="1.8" height="1.8" fill="#dca428" transform="rotate(270)"/><rect x="-0.9" y="-4.4" width="1.8" height="1.8" fill="#dca428" transform="rotate(315)"/><circle r="3.2" fill="#f6c84c" stroke="#dca428" stroke-width="0.9"/><circle r="1.1" fill="#fdeeb0"/></g><g transform="translate(4.2 10.6)"><rect x="-0.9" y="-4.4" width="1.8" height="1.8" fill="#dca428" transform="rotate(0)"/><rect x="-0.9" y="-4.4" width="1.8" height="1.8" fill="#dca428" transform="rotate(45)"/><rect x="-0.9" y="-4.4" width="1.8" height="1.8" fill="#dca428" transform="rotate(90)"/><rect x="-0.9" y="-4.4" width="1.8" height="1.8" fill="#dca428" transform="rotate(135)"/><rect x="-0.9" y="-4.4" width="1.8" height="1.8" fill="#dca428" transform="rotate(180)"/><rect x="-0.9" y="-4.4" width="1.8" height="1.8" fill="#dca428" transform="rotate(225)"/><rect x="-0.9" y="-4.4" width="1.8" height="1.8" fill="#dca428" transform="rotate(270)"/><rect x="-0.9" y="-4.4" width="1.8" height="1.8" fill="#dca428" transform="rotate(315)"/><circle r="3.2" fill="#f6c84c" stroke="#dca428" stroke-width="0.9"/><circle r="1.1" fill="#fdeeb0"/></g></svg>
<svg style="left:54.4px;top:304.61px" width="15" height="15" viewBox="0 0 15 16" preserveAspectRatio="none"><path d="M1.6 5.4 Q3.4 1 8 1.6" stroke="#2a6ab4" stroke-width="1.3" fill="none"/><path d="M0.4 2.6 L1.2 6.6 L4.4 4.8 Z" fill="#2a6ab4"/><path d="M13 10.6 Q11.6 15 6.8 14.4" stroke="#2a6ab4" stroke-width="1.3" fill="none"/><path d="M14.4 13.4 L13.4 9.4 L10.4 11.4 Z" fill="#2a6ab4"/><g transform="translate(10.4 5.4)"><rect x="-0.9" y="-4.4" width="1.8" height="1.8" fill="#dca428" transform="rotate(0)"/><rect x="-0.9" y="-4.4" width="1.8" height="1.8" fill="#dca428" transform="rotate(45)"/><rect x="-0.9" y="-4.4" width="1.8" height="1.8" fill="#dca428" transform="rotate(90)"/><rect x="-0.9" y="-4.4" width="1.8" height="1.8" fill="#dca428" transform="rotate(135)"/><rect x="-0.9" y="-4.4" width="1.8" height="1.8" fill="#dca428" transform="rotate(180)"/><rect x="-0.9" y="-4.4" width="1.8" height="1.8" fill="#dca428" transform="rotate(225)"/><rect x="-0.9" y="-4.4" width="1.8" height="1.8" fill="#dca428" transform="rotate(270)"/><rect x="-0.9" y="-4.4" width="1.8" height="1.8" fill="#dca428" transform="rotate(315)"/><circle r="3.2" fill="#f6c84c" stroke="#dca428" stroke-width="0.9"/><circle r="1.1" fill="#fdeeb0"/></g><g transform="translate(4.2 10.6)"><rect x="-0.9" y="-4.4" width="1.8" height="1.8" fill="#dca428" transform="rotate(0)"/><rect x="-0.9" y="-4.4" width="1.8" height="1.8" fill="#dca428" transform="rotate(45)"/><rect x="-0.9" y="-4.4" width="1.8" height="1.8" fill="#dca428" transform="rotate(90)"/><rect x="-0.9" y="-4.4" width="1.8" height="1.8" fill="#dca428" transform="rotate(135)"/><rect x="-0.9" y="-4.4" width="1.8" height="1.8" fill="#dca428" transform="rotate(180)"/><rect x="-0.9" y="-4.4" width="1.8" height="1.8" fill="#dca428" transform="rotate(225)"/><rect x="-0.9" y="-4.4" width="1.8" height="1.8" fill="#dca428" transform="rotate(270)"/><rect x="-0.9" y="-4.4" width="1.8" height="1.8" fill="#dca428" transform="rotate(315)"/><circle r="3.2" fill="#f6c84c" stroke="#dca428" stroke-width="0.9"/><circle r="1.1" fill="#fdeeb0"/></g></svg>
<svg style="left:54.6px;top:197.26px" width="15" height="15" viewBox="0 0 15 15"><g transform="translate(9.6 5.4)"><rect x="-0.9" y="-4.8" width="1.8" height="1.8" fill="#8c5e22" transform="rotate(0)"/><rect x="-0.9" y="-4.8" width="1.8" height="1.8" fill="#8c5e22" transform="rotate(45)"/><rect x="-0.9" y="-4.8" width="1.8" height="1.8" fill="#8c5e22" transform="rotate(90)"/><rect x="-0.9" y="-4.8" width="1.8" height="1.8" fill="#8c5e22" transform="rotate(135)"/><rect x="-0.9" y="-4.8" width="1.8" height="1.8" fill="#8c5e22" transform="rotate(180)"/><rect x="-0.9" y="-4.8" width="1.8" height="1.8" fill="#8c5e22" transform="rotate(225)"/><rect x="-0.9" y="-4.8" width="1.8" height="1.8" fill="#8c5e22" transform="rotate(270)"/><rect x="-0.9" y="-4.8" width="1.8" height="1.8" fill="#8c5e22" transform="rotate(315)"/><circle r="3.5" fill="#ecc070" stroke="#8c5e22" stroke-width="1.1"/><circle r="1.3" fill="#f8f0e0" stroke="#7a6a8a" stroke-width="0.6"/></g><rect x="0.4" y="7.6" width="7.6" height="6.2" fill="#ecc23c" stroke="#b8901c" stroke-width="0.8"/><rect x="2.2" y="8.8" width="1.3" height="4" fill="#6e5410"/><rect x="4.8" y="8.8" width="1.3" height="4" fill="#6e5410"/></svg>
<svg style="left:54.6px;top:240.68px" width="15" height="15" viewBox="0 0 15 15"><g transform="translate(9.6 5.4)"><rect x="-0.9" y="-4.8" width="1.8" height="1.8" fill="#8c5e22" transform="rotate(0)"/><rect x="-0.9" y="-4.8" width="1.8" height="1.8" fill="#8c5e22" transform="rotate(45)"/><rect x="-0.9" y="-4.8" width="1.8" height="1.8" fill="#8c5e22" transform="rotate(90)"/><rect x="-0.9" y="-4.8" width="1.8" height="1.8" fill="#8c5e22" transform="rotate(135)"/><rect x="-0.9" y="-4.8" width="1.8" height="1.8" fill="#8c5e22" transform="rotate(180)"/><rect x="-0.9" y="-4.8" width="1.8" height="1.8" fill="#8c5e22" transform="rotate(225)"/><rect x="-0.9" y="-4.8" width="1.8" height="1.8" fill="#8c5e22" transform="rotate(270)"/><rect x="-0.9" y="-4.8" width="1.8" height="1.8" fill="#8c5e22" transform="rotate(315)"/><circle r="3.5" fill="#ecc070" stroke="#8c5e22" stroke-width="1.1"/><circle r="1.3" fill="#f8f0e0" stroke="#7a6a8a" stroke-width="0.6"/></g><rect x="0.4" y="7.6" width="7.6" height="6.2" fill="#ecc23c" stroke="#b8901c" stroke-width="0.8"/><rect x="2.2" y="8.8" width="1.3" height="4" fill="#6e5410"/><rect x="4.8" y="8.8" width="1.3" height="4" fill="#6e5410"/></svg>
<svg style="left:54.6px;top:284.1px" width="15" height="15" viewBox="0 0 15 15"><g transform="translate(9.6 5.4)"><rect x="-0.9" y="-4.8" width="1.8" height="1.8" fill="#8c5e22" transform="rotate(0)"/><rect x="-0.9" y="-4.8" width="1.8" height="1.8" fill="#8c5e22" transform="rotate(45)"/><rect x="-0.9" y="-4.8" width="1.8" height="1.8" fill="#8c5e22" transform="rotate(90)"/><rect x="-0.9" y="-4.8" width="1.8" height="1.8" fill="#8c5e22" transform="rotate(135)"/><rect x="-0.9" y="-4.8" width="1.8" height="1.8" fill="#8c5e22" transform="rotate(180)"/><rect x="-0.9" y="-4.8" width="1.8" height="1.8" fill="#8c5e22" transform="rotate(225)"/><rect x="-0.9" y="-4.8" width="1.8" height="1.8" fill="#8c5e22" transform="rotate(270)"/><rect x="-0.9" y="-4.8" width="1.8" height="1.8" fill="#8c5e22" transform="rotate(315)"/><circle r="3.5" fill="#ecc070" stroke="#8c5e22" stroke-width="1.1"/><circle r="1.3" fill="#f8f0e0" stroke="#7a6a8a" stroke-width="0.6"/></g><rect x="0.4" y="7.6" width="7.6" height="6.2" fill="#ecc23c" stroke="#b8901c" stroke-width="0.8"/><rect x="2.2" y="8.8" width="1.3" height="4" fill="#6e5410"/><rect x="4.8" y="8.8" width="1.3" height="4" fill="#6e5410"/></svg>
<svg style="left:6px;top:329px" width="17" height="11" viewBox="0 0 17 11"><rect x="0.2" y="0.4" width="3.5999999999999996" height="1.7" fill="#3c48c4"/><rect x="5.2" y="0.4" width="2.5999999999999996" height="1.7" fill="#3c48c4"/><rect x="9.2" y="0.4" width="1.6000000000000014" height="1.7" fill="#3c48c4"/><rect x="12" y="0.4" width="1.5999999999999996" height="1.7" fill="#3c48c4"/><rect x="15" y="0.4" width="1" height="1.7" fill="#3c48c4"/><rect x="0.2" y="4.5" width="4.0" height="1.7" fill="#3c48c4"/><rect x="6.2" y="4.5" width="3.3999999999999995" height="1.7" fill="#3c48c4"/><rect x="11.4" y="4.5" width="1.4000000000000004" height="1.7" fill="#3c48c4"/><rect x="14.2" y="4.5" width="0.8000000000000007" height="1.7" fill="#3c48c4"/><rect x="0.2" y="8.4" width="11.8" height="2.1" fill="#3c48c4"/></svg>
<svg style="left:144px;top:328px" width="12.6" height="12.6" viewBox="0 0 12.6 12.6"><rect x="0.6" y="0.6" width="11.2" height="11.2" fill="#f2f8fe" stroke="#b8a06c" stroke-width="1"/><rect x="1.1" y="1.1" width="10.2" height="2.6" fill="#4a90d8"/></svg>
<svg style="left:263.2px;top:330.2px" width="9.4" height="9.4"><path d="M0.6 0.6 L8.8 8.8 M8.8 0.6 L0.6 8.8" stroke="#6f6f6f" stroke-width="1.35" fill="none"/></svg>
<svg style="left:2.4px;top:590.4px" width="7" height="8" viewBox="0 0 7 8"><path d="M0.4 2.6 H3.2 V0.4 L6.6 4 L3.2 7.6 V5.4 H0.4 Z" fill="#5a9ae0" stroke="#2a62b0" stroke-width="0.8"/></svg>
<div style="left:7.2px;top:347px;width:1.6px;height:2.2px;background:#7a8ab0;"></div>
<svg style="left:692.2px;top:46.2px" width="17.0" height="10.0" viewBox="0 0 17 10"><path d="M3 0.4 Q0.2 4.8 3 9.6" stroke="#3f94d6" stroke-width="1.25" fill="none"/><path d="M4.6 2.6 L8.6 7.4 M8.6 2.6 L4.6 7.4" stroke="#3f94d6" stroke-width="1.3" fill="none"/><path d="M10.2 0.4 Q13 4.8 10.2 9.6" stroke="#3f94d6" stroke-width="1.25" fill="none"/><rect x="13.2" y="3.1" width="3.6" height="1.3" fill="#8cbce6"/><rect x="13.2" y="5.7" width="3.6" height="1.3" fill="#8cbce6"/></svg>
<svg style="left:786.6px;top:45.2px" width="15" height="13" viewBox="0 0 15 13"><circle cx="3.8" cy="3.8" r="3.6" fill="#3a8fd2"/><circle cx="3.6" cy="3.4" r="1.6" fill="#6cb0e4"/><circle cx="10.9" cy="8.8" r="3.6" fill="#3a8fd2"/><circle cx="10.7" cy="8.4" r="1.6" fill="#6cb0e4"/></svg>
<svg style="left:898.2px;top:44px" width="16" height="14" viewBox="0 0 16 14"><circle cx="3" cy="6.8" r="2.5" fill="none" stroke="#3a8fd2" stroke-width="1.3"/><circle cx="10" cy="6.8" r="2.5" fill="none" stroke="#3a8fd2" stroke-width="1.3"/><path d="M5.4 6.2 H7.6" stroke="#3a8fd2" stroke-width="1.2"/><path d="M1.4 4.8 Q3.4 0.6 6.2 1.2 Q7.4 1.8 6.4 3" stroke="#3a8fd2" stroke-width="1.2" fill="none"/><path d="M10.6 4.4 Q12.6 0.8 15 1.4 Q16 2.2 15.2 3.6" stroke="#3a8fd2" stroke-width="1.2" fill="none"/><rect x="5.4" y="10.6" width="2.6" height="3" fill="#4a9ad8"/><rect x="10.8" y="10.6" width="3" height="3" fill="#7ab6e4"/></svg>
<svg style="left:1009.2px;top:47.4px" width="9.4" height="9.4"><path d="M0.6 0.6 L8.8 8.8 M8.8 0.6 L0.6 8.8" stroke="#7a7a7a" stroke-width="1.35" fill="none"/></svg>
<svg style="left:689.4px;top:169.8px" width="17.0" height="10.0" viewBox="0 0 17 10"><path d="M3 0.4 Q0.2 4.8 3 9.6" stroke="#3f94d6" stroke-width="1.25" fill="none"/><path d="M4.6 2.6 L8.6 7.4 M8.6 2.6 L4.6 7.4" stroke="#3f94d6" stroke-width="1.3" fill="none"/><path d="M10.2 0.4 Q13 4.8 10.2 9.6" stroke="#3f94d6" stroke-width="1.25" fill="none"/><rect x="13.2" y="3.1" width="3.6" height="1.3" fill="#8cbce6"/><rect x="13.2" y="5.7" width="3.6" height="1.3" fill="#8cbce6"/></svg>
<svg style="left:782px;top:170.8px" width="9.4" height="9.4"><path d="M0.6 0.6 L8.8 8.8 M8.8 0.6 L0.6 8.8" stroke="#6f6f6f" stroke-width="1.35" fill="none"/></svg>
<svg style="left:803.4px;top:168.8px" width="15" height="13" viewBox="0 0 15 13"><circle cx="3.8" cy="3.8" r="3.6" fill="#3a8fd2"/><circle cx="3.6" cy="3.4" r="1.6" fill="#6cb0e4"/><circle cx="10.9" cy="8.8" r="3.6" fill="#3a8fd2"/><circle cx="10.7" cy="8.4" r="1.6" fill="#6cb0e4"/></svg>
<svg style="left:914.6px;top:167.6px" width="16" height="14" viewBox="0 0 16 14"><circle cx="3" cy="6.8" r="2.5" fill="none" stroke="#3a8fd2" stroke-width="1.3"/><circle cx="10" cy="6.8" r="2.5" fill="none" stroke="#3a8fd2" stroke-width="1.3"/><path d="M5.4 6.2 H7.6" stroke="#3a8fd2" stroke-width="1.2"/><path d="M1.4 4.8 Q3.4 0.6 6.2 1.2 Q7.4 1.8 6.4 3" stroke="#3a8fd2" stroke-width="1.2" fill="none"/><path d="M10.6 4.4 Q12.6 0.8 15 1.4 Q16 2.2 15.2 3.6" stroke="#3a8fd2" stroke-width="1.2" fill="none"/><rect x="5.4" y="10.6" width="2.6" height="3" fill="#4a9ad8"/><rect x="10.8" y="10.6" width="3" height="3" fill="#7ab6e4"/></svg>
<svg style="left:707px;top:97.7px" width="15.979999999999999" height="9.399999999999999" viewBox="0 0 17 10"><path d="M3 0.4 Q0.2 4.8 3 9.6" stroke="#46567a" stroke-width="1.9" fill="none"/><path d="M4.6 2.6 L8.6 7.4 M8.6 2.6 L4.6 7.4" stroke="#46567a" stroke-width="1.5" fill="none"/><path d="M10.2 0.4 Q13 4.8 10.2 9.6" stroke="#46567a" stroke-width="1.9" fill="none"/><rect x="13.2" y="3.1" width="3.6" height="1.3" fill="#6a7a9a"/><rect x="13.2" y="5.7" width="3.6" height="1.3" fill="#6a7a9a"/></svg>
<svg style="left:707px;top:119.2px" width="15.979999999999999" height="9.399999999999999" viewBox="0 0 17 10"><path d="M3 0.4 Q0.2 4.8 3 9.6" stroke="#46567a" stroke-width="1.9" fill="none"/><path d="M4.6 2.6 L8.6 7.4 M8.6 2.6 L4.6 7.4" stroke="#46567a" stroke-width="1.5" fill="none"/><path d="M10.2 0.4 Q13 4.8 10.2 9.6" stroke="#46567a" stroke-width="1.9" fill="none"/><rect x="13.2" y="3.1" width="3.6" height="1.3" fill="#6a7a9a"/><rect x="13.2" y="5.7" width="3.6" height="1.3" fill="#6a7a9a"/></svg>
<svg style="left:704.2px;top:221.2px" width="15.979999999999999" height="9.399999999999999" viewBox="0 0 17 10"><path d="M3 0.4 Q0.2 4.8 3 9.6" stroke="#587a96" stroke-width="1.9" fill="none"/><path d="M4.6 2.6 L8.6 7.4 M8.6 2.6 L4.6 7.4" stroke="#587a96" stroke-width="1.5" fill="none"/><path d="M10.2 0.4 Q13 4.8 10.2 9.6" stroke="#587a96" stroke-width="1.9" fill="none"/><rect x="13.2" y="3.1" width="3.6" height="1.3" fill="#a8c0a0"/><rect x="13.2" y="5.7" width="3.6" height="1.3" fill="#a8c0a0"/></svg>
<svg style="left:704.2px;top:242.95px" width="15.979999999999999" height="9.399999999999999" viewBox="0 0 17 10"><path d="M3 0.4 Q0.2 4.8 3 9.6" stroke="#46567a" stroke-width="1.9" fill="none"/><path d="M4.6 2.6 L8.6 7.4 M8.6 2.6 L4.6 7.4" stroke="#46567a" stroke-width="1.5" fill="none"/><path d="M10.2 0.4 Q13 4.8 10.2 9.6" stroke="#46567a" stroke-width="1.9" fill="none"/><rect x="13.2" y="3.1" width="3.6" height="1.3" fill="#6a7a9a"/><rect x="13.2" y="5.7" width="3.6" height="1.3" fill="#6a7a9a"/></svg>
<svg style="left:704.2px;top:264.7px" width="15.979999999999999" height="9.399999999999999" viewBox="0 0 17 10"><path d="M3 0.4 Q0.2 4.8 3 9.6" stroke="#46567a" stroke-width="1.9" fill="none"/><path d="M4.6 2.6 L8.6 7.4 M8.6 2.6 L4.6 7.4" stroke="#46567a" stroke-width="1.5" fill="none"/><path d="M10.2 0.4 Q13 4.8 10.2 9.6" stroke="#46567a" stroke-width="1.9" fill="none"/><rect x="13.2" y="3.1" width="3.6" height="1.3" fill="#6a7a9a"/><rect x="13.2" y="5.7" width="3.6" height="1.3" fill="#6a7a9a"/></svg>
<svg style="left:704.2px;top:286.45px" width="15.979999999999999" height="9.399999999999999" viewBox="0 0 17 10"><path d="M3 0.4 Q0.2 4.8 3 9.6" stroke="#46567a" stroke-width="1.9" fill="none"/><path d="M4.6 2.6 L8.6 7.4 M8.6 2.6 L4.6 7.4" stroke="#46567a" stroke-width="1.5" fill="none"/><path d="M10.2 0.4 Q13 4.8 10.2 9.6" stroke="#46567a" stroke-width="1.9" fill="none"/><rect x="13.2" y="3.1" width="3.6" height="1.3" fill="#6a7a9a"/><rect x="13.2" y="5.7" width="3.6" height="1.3" fill="#6a7a9a"/></svg>
<svg style="left:704.2px;top:308.2px" width="15.979999999999999" height="9.399999999999999" viewBox="0 0 17 10"><path d="M3 0.4 Q0.2 4.8 3 9.6" stroke="#46567a" stroke-width="1.9" fill="none"/><path d="M4.6 2.6 L8.6 7.4 M8.6 2.6 L4.6 7.4" stroke="#46567a" stroke-width="1.5" fill="none"/><path d="M10.2 0.4 Q13 4.8 10.2 9.6" stroke="#46567a" stroke-width="1.9" fill="none"/><rect x="13.2" y="3.1" width="3.6" height="1.3" fill="#6a7a9a"/><rect x="13.2" y="5.7" width="3.6" height="1.3" fill="#6a7a9a"/></svg>
<svg style="left:707.8px;top:139.8px" width="13" height="13" viewBox="0 0 13 13"><path d="M4.6 0.6 H8.2 V4.6 H12.2 V8.2 H8.2 V12.2 H4.6 V8.2 H0.6 V4.6 H4.6 Z" fill="#acd034" stroke="#78a02c" stroke-width="1"/><rect x="5.6" y="1.6" width="1.4" height="9.6" fill="#dcf07c"/></svg>
<span style="left:105.7px;top:12.13px;line-height:21.00px;color:#1c1c1c;font-family:'Liberation Sans', sans-serif;font-size:16.8px;font-weight:normal;font-style:normal;letter-spacing:-0.584px;white-space:pre;-webkit-text-stroke:0.45px;">New Connection...</span>
<span style="left:27px;top:40.11px;line-height:20.00px;color:#4a4a4a;font-family:'Liberation Sans', sans-serif;font-size:16px;font-weight:normal;font-style:normal;letter-spacing:-0.431px;white-space:pre;">Debug</span>
<span style="left:121px;top:40.11px;line-height:20.00px;color:#4a4a4a;font-family:'Liberation Sans', sans-serif;font-size:16px;font-weight:normal;font-style:normal;letter-spacing:-0.052px;white-space:pre;">Project Explorer</span>
<span style="left:72px;top:63.91px;line-height:20.00px;color:#fbfbf3;font-family:'Liberation Sans', sans-serif;font-size:16px;font-weight:normal;font-style:normal;letter-spacing:-0.184px;white-space:pre;">board.fpga.hps.core[0] (Step Over)</span>
<span style="left:89px;top:85.62px;line-height:20.00px;color:#464646;font-family:'Liberation Sans', sans-serif;font-size:16px;font-weight:normal;font-style:normal;letter-spacing:-0.082px;white-space:pre;">0x0000000000400664 main(): testSymFile.c, line 18</span>
<span style="left:89px;top:107.33px;line-height:20.00px;color:#464646;font-family:'Liberation Sans', sans-serif;font-size:16px;font-weight:normal;font-style:normal;letter-spacing:0.239px;white-space:pre;">0x0000ffffb1dc7734</span>
<span style="left:89px;top:129.04px;line-height:20.00px;color:#464646;font-family:'Liberation Sans', sans-serif;font-size:16px;font-weight:normal;font-style:normal;letter-spacing:0.234px;white-space:pre;">0x0000ffffb1dc780c</span>
<span style="left:89px;top:150.75px;line-height:20.00px;color:#464646;font-family:'Liberation Sans', sans-serif;font-size:16px;font-weight:normal;font-style:normal;letter-spacing:-0.100px;white-space:pre;">0x000000000040053c _start(): ../sysdeps/aarch64/start.S, line 92</span>
<span style="left:72px;top:172.46px;line-height:20.00px;color:#464646;font-family:'Liberation Sans', sans-serif;font-size:16px;font-weight:normal;font-style:normal;letter-spacing:-0.129px;white-space:pre;">board.fpga.hps.cpu_mem[0]</span>
<span style="left:72px;top:194.17px;line-height:20.00px;color:#464646;font-family:'Liberation Sans', sans-serif;font-size:16px;font-weight:normal;font-style:normal;letter-spacing:-0.240px;white-space:pre;">board.fpga.hps.core[1] (Suspended)</span>
<span style="left:72px;top:215.88px;line-height:20.00px;color:#464646;font-family:'Liberation Sans', sans-serif;font-size:16px;font-weight:normal;font-style:normal;letter-spacing:-0.129px;white-space:pre;">board.fpga.hps.cpu_mem[1]</span>
<span style="left:72px;top:237.59px;line-height:20.00px;color:#464646;font-family:'Liberation Sans', sans-serif;font-size:16px;font-weight:normal;font-style:normal;letter-spacing:-0.240px;white-space:pre;">board.fpga.hps.core[2] (Suspended)</span>
<span style="left:72px;top:259.30px;line-height:20.00px;color:#464646;font-family:'Liberation Sans', sans-serif;font-size:16px;font-weight:normal;font-style:normal;letter-spacing:-0.129px;white-space:pre;">board.fpga.hps.cpu_mem[2]</span>
<span style="left:72px;top:281.01px;line-height:20.00px;color:#464646;font-family:'Liberation Sans', sans-serif;font-size:16px;font-weight:normal;font-style:normal;letter-spacing:-0.240px;white-space:pre;">board.fpga.hps.core[3] (Suspended)</span>
<span style="left:72px;top:302.72px;line-height:20.00px;color:#464646;font-family:'Liberation Sans', sans-serif;font-size:16px;font-weight:normal;font-style:normal;letter-spacing:-0.129px;white-space:pre;clip-path:inset(0 0 8.4px 0);">board.fpga.hps.cpu_mem[3]</span>
<span style="left:27px;top:324.91px;line-height:20.00px;color:#4a4a4a;font-family:'Liberation Sans', sans-serif;font-size:16px;font-weight:normal;font-style:normal;letter-spacing:-0.517px;white-space:pre;">Disassembly</span>
<span style="left:162px;top:324.91px;line-height:20.00px;color:#4a4a4a;font-family:'Liberation Sans', sans-serif;font-size:16px;font-weight:normal;font-style:normal;letter-spacing:-0.155px;white-space:pre;">testSymFile.c</span>
<span style="left:35px;top:337.96px;line-height:18.34px;color:#1f1f1f;font-family:'DejaVu Sans Mono', 'Liberation Mono', monospace;font-size:14.67px;font-weight:normal;font-style:normal;letter-spacing:0.000px;white-space:pre;clip-path:inset(8.8px 0 0 0);">{</span>
<span style="left:51.7px;top:373.46px;line-height:18.34px;color:#1f1f1f;font-family:'DejaVu Sans Mono', 'Liberation Mono', monospace;font-size:14.67px;font-weight:normal;font-style:normal;letter-spacing:0.075px;white-space:pre;"><span class="k">int</span> x = 1000;</span>
<span style="left:51.7px;top:391.21px;line-height:18.34px;color:#1f1f1f;font-family:'DejaVu Sans Mono', 'Liberation Mono', monospace;font-size:14.67px;font-weight:normal;font-style:normal;letter-spacing:0.074px;white-space:pre;"><span class="k">int</span> a;</span>
<span style="left:51.7px;top:408.96px;line-height:18.34px;color:#1f1f1f;font-family:'DejaVu Sans Mono', 'Liberation Mono', monospace;font-size:14.67px;font-weight:normal;font-style:normal;letter-spacing:0.074px;white-space:pre;"><span class="k">int</span> b;</span>
<span style="left:51.7px;top:426.71px;line-height:18.34px;color:#1f1f1f;font-family:'DejaVu Sans Mono', 'Liberation Mono', monospace;font-size:14.67px;font-weight:normal;font-style:normal;letter-spacing:0.074px;white-space:pre;"><span class="k">int</span> c;</span>
<span style="left:51.7px;top:444.46px;line-height:18.34px;color:#1f1f1f;font-family:'DejaVu Sans Mono', 'Liberation Mono', monospace;font-size:14.67px;font-weight:normal;font-style:normal;letter-spacing:0.076px;white-space:pre;"><span class="k">volatile</span> <span class="k">int</span> exitVar = 0;</span>
<span style="left:51.7px;top:479.96px;line-height:18.34px;color:#1f1f1f;font-family:'DejaVu Sans Mono', 'Liberation Mono', monospace;font-size:14.67px;font-weight:normal;font-style:normal;letter-spacing:0.076px;white-space:pre;">printf(<span class="s">&quot;=== My Debug example ===\n&quot;</span>);</span>
<span style="left:51.7px;top:497.71px;line-height:18.34px;color:#1f1f1f;font-family:'DejaVu Sans Mono', 'Liberation Mono', monospace;font-size:14.67px;font-weight:normal;font-style:normal;letter-spacing:0.076px;white-space:pre;"><span class="k">while</span> (exitVar == 0);</span>
<span style="left:51.7px;top:515.46px;line-height:18.34px;color:#1f1f1f;font-family:'DejaVu Sans Mono', 'Liberation Mono', monospace;font-size:14.67px;font-weight:normal;font-style:normal;letter-spacing:0.074px;white-space:pre;">a = x;</span>
<span style="left:51.7px;top:533.21px;line-height:18.34px;color:#1f1f1f;font-family:'DejaVu Sans Mono', 'Liberation Mono', monospace;font-size:14.67px;font-weight:normal;font-style:normal;letter-spacing:0.074px;white-space:pre;">b = x;</span>
<span style="left:51.7px;top:550.96px;line-height:18.34px;color:#1f1f1f;font-family:'DejaVu Sans Mono', 'Liberation Mono', monospace;font-size:14.67px;font-weight:normal;font-style:normal;letter-spacing:0.075px;white-space:pre;">c = a + b;</span>
<span style="left:51.7px;top:568.71px;line-height:18.34px;color:#1f1f1f;font-family:'DejaVu Sans Mono', 'Liberation Mono', monospace;font-size:14.67px;font-weight:normal;font-style:normal;letter-spacing:0.075px;white-space:pre;">printf(<span class="s">&quot;%d\n&quot;</span>, c);</span>
<span style="left:51.7px;top:586.46px;line-height:18.34px;color:#1f1f1f;font-family:'DejaVu Sans Mono', 'Liberation Mono', monospace;font-size:14.67px;font-weight:normal;font-style:normal;letter-spacing:0.075px;white-space:pre;"><span class="k">return</span> 0;</span>
<span style="left:33.6px;top:604.21px;line-height:18.34px;color:#1f1f1f;font-family:'DejaVu Sans Mono', 'Liberation Mono', monospace;font-size:14.67px;font-weight:normal;font-style:normal;letter-spacing:0.000px;white-space:pre;">}</span>
<span style="left:713px;top:41.51px;line-height:20.00px;color:#4a4a4a;font-family:'Liberation Sans', sans-serif;font-size:16px;font-weight:normal;font-style:normal;letter-spacing:-0.213px;white-space:pre;">Variables</span>
<span style="left:805.8px;top:41.51px;line-height:20.00px;color:#4a4a4a;font-family:'Liberation Sans', sans-serif;font-size:16px;font-weight:normal;font-style:normal;letter-spacing:-0.045px;white-space:pre;">Breakpoints</span>
<span style="left:919.5px;top:41.51px;line-height:20.00px;color:#4a4a4a;font-family:'Liberation Sans', sans-serif;font-size:16px;font-weight:normal;font-style:normal;letter-spacing:-0.514px;white-space:pre;">Expressions</span>
<span style="left:1050.7px;top:41.51px;line-height:20.00px;color:#4a4a4a;font-family:'Liberation Sans', sans-serif;font-size:16px;font-weight:normal;font-style:normal;letter-spacing:-0.275px;white-space:pre;">Registers</span>
<span style="left:725px;top:92.31px;line-height:20.00px;color:#464646;font-family:'Liberation Sans', sans-serif;font-size:16px;font-weight:normal;font-style:normal;letter-spacing:-0.577px;white-space:pre;">a+b+c</span>
<span style="left:725px;top:113.81px;line-height:20.00px;color:#464646;font-family:'Liberation Sans', sans-serif;font-size:16px;font-weight:normal;font-style:normal;letter-spacing:-0.426px;white-space:pre;">c==4000</span>
<span style="left:725.5px;top:136.11px;line-height:20.00px;color:#f3f4e6;font-family:'Liberation Sans', sans-serif;font-size:16px;font-weight:normal;font-style:italic;letter-spacing:-0.283px;white-space:pre;">Add new expression</span>
<span style="left:1022.3px;top:92.31px;line-height:20.00px;color:#464646;font-family:'Liberation Sans', sans-serif;font-size:16px;font-weight:normal;font-style:normal;letter-spacing:-0.052px;white-space:pre;">&lt;Integer-64&gt;</span>
<span style="left:1022.8px;top:113.81px;line-height:20.00px;color:#464646;font-family:'Liberation Sans', sans-serif;font-size:16px;font-weight:normal;font-style:normal;letter-spacing:0.498px;white-space:pre;">int</span>
<span style="left:1337.2px;top:92.88px;line-height:20.62px;color:#4a4a4a;font-family:'DejaVu Sans Mono', 'Liberation Mono', monospace;font-size:16.5px;font-weight:normal;font-style:normal;letter-spacing:0.000px;white-space:pre;">8000</span>
<span style="left:1337.2px;top:114.58px;line-height:20.62px;color:#4a4a4a;font-family:'DejaVu Sans Mono', 'Liberation Mono', monospace;font-size:16.5px;font-weight:normal;font-style:normal;letter-spacing:0.000px;white-space:pre;">1</span>
<span style="left:710.5px;top:165.41px;line-height:20.00px;color:#4a4a4a;font-family:'Liberation Sans', sans-serif;font-size:16px;font-weight:normal;font-style:normal;letter-spacing:-0.224px;white-space:pre;">Variables</span>
<span style="left:823.2px;top:165.41px;line-height:20.00px;color:#4a4a4a;font-family:'Liberation Sans', sans-serif;font-size:16px;font-weight:normal;font-style:normal;letter-spacing:-0.118px;white-space:pre;">Breakpoints</span>
<span style="left:935.7px;top:165.41px;line-height:20.00px;color:#4a4a4a;font-family:'Liberation Sans', sans-serif;font-size:16px;font-weight:normal;font-style:normal;letter-spacing:-0.441px;white-space:pre;">Expressions</span>
<span style="left:1047.9px;top:165.41px;line-height:20.00px;color:#4a4a4a;font-family:'Liberation Sans', sans-serif;font-size:16px;font-weight:normal;font-style:normal;letter-spacing:-0.253px;white-space:pre;">Registers</span>
<span style="left:721.7px;top:215.91px;line-height:20.00px;color:#fbfbf3;font-family:'Liberation Sans', sans-serif;font-size:16px;font-weight:normal;font-style:normal;letter-spacing:0.000px;white-space:pre;">x</span>
<span style="left:1019.8px;top:215.91px;line-height:20.00px;color:#fbfbf3;font-family:'Liberation Sans', sans-serif;font-size:16px;font-weight:normal;font-style:normal;letter-spacing:0.498px;white-space:pre;">int</span>
<span style="left:1334.5px;top:215.98px;line-height:20.62px;color:#f3f4e6;font-family:'DejaVu Sans Mono', 'Liberation Mono', monospace;font-size:16.5px;font-weight:normal;font-style:normal;letter-spacing:0.000px;white-space:pre;">2000</span>
<span style="left:721.7px;top:237.66px;line-height:20.00px;color:#464646;font-family:'Liberation Sans', sans-serif;font-size:16px;font-weight:normal;font-style:normal;letter-spacing:0.000px;white-space:pre;">a</span>
<span style="left:1019.8px;top:237.66px;line-height:20.00px;color:#464646;font-family:'Liberation Sans', sans-serif;font-size:16px;font-weight:normal;font-style:normal;letter-spacing:0.498px;white-space:pre;">int</span>
<span style="left:1334.5px;top:237.73px;line-height:20.62px;color:#4a4a4a;font-family:'DejaVu Sans Mono', 'Liberation Mono', monospace;font-size:16.5px;font-weight:normal;font-style:normal;letter-spacing:0.000px;white-space:pre;">2000</span>
<span style="left:721.7px;top:259.41px;line-height:20.00px;color:#464646;font-family:'Liberation Sans', sans-serif;font-size:16px;font-weight:normal;font-style:normal;letter-spacing:0.000px;white-space:pre;">b</span>
<span style="left:1019.8px;top:259.41px;line-height:20.00px;color:#464646;font-family:'Liberation Sans', sans-serif;font-size:16px;font-weight:normal;font-style:normal;letter-spacing:0.498px;white-space:pre;">int</span>
<span style="left:1334.5px;top:259.48px;line-height:20.62px;color:#4a4a4a;font-family:'DejaVu Sans Mono', 'Liberation Mono', monospace;font-size:16.5px;font-weight:normal;font-style:normal;letter-spacing:0.000px;white-space:pre;">2000</span>
<span style="left:721.7px;top:281.16px;line-height:20.00px;color:#464646;font-family:'Liberation Sans', sans-serif;font-size:16px;font-weight:normal;font-style:normal;letter-spacing:0.000px;white-space:pre;">c</span>
<span style="left:1019.8px;top:281.16px;line-height:20.00px;color:#464646;font-family:'Liberation Sans', sans-serif;font-size:16px;font-weight:normal;font-style:normal;letter-spacing:0.498px;white-space:pre;">int</span>
<span style="left:1334.5px;top:281.23px;line-height:20.62px;color:#4a4a4a;font-family:'DejaVu Sans Mono', 'Liberation Mono', monospace;font-size:16.5px;font-weight:normal;font-style:normal;letter-spacing:0.000px;white-space:pre;">4000</span>
<span style="left:721.7px;top:302.91px;line-height:20.00px;color:#464646;font-family:'Liberation Sans', sans-serif;font-size:16px;font-weight:normal;font-style:normal;letter-spacing:0.199px;white-space:pre;">exitVar</span>
<span style="left:1019.8px;top:302.91px;line-height:20.00px;color:#464646;font-family:'Liberation Sans', sans-serif;font-size:16px;font-weight:normal;font-style:normal;letter-spacing:0.270px;white-space:pre;">volatile int</span>
<span style="left:1334.5px;top:302.98px;line-height:20.62px;color:#4a4a4a;font-family:'DejaVu Sans Mono', 'Liberation Mono', monospace;font-size:16.5px;font-weight:normal;font-style:normal;letter-spacing:0.000px;white-space:pre;">1</span>
<span style="left:688.5px;top:362.18px;line-height:20.62px;color:#555;font-family:'DejaVu Sans Mono', 'Liberation Mono', monospace;font-size:16.5px;font-weight:normal;font-style:normal;letter-spacing:0.000px;white-space:pre;">2000</span>
<span style="left:688.5px;top:380.10px;line-height:19.88px;color:#3a3a3a;font-family:'Liberation Sans', sans-serif;font-size:15.9px;font-weight:bold;font-style:normal;letter-spacing:-0.463px;white-space:pre;">Hex:</span>
<span style="left:725.8px;top:380.58px;line-height:20.62px;color:#555;font-family:'DejaVu Sans Mono', 'Liberation Mono', monospace;font-size:16.5px;font-weight:normal;font-style:normal;letter-spacing:0.000px;white-space:pre;">000007d0</span>
<span style="left:805.5px;top:380.10px;line-height:19.88px;color:#3a3a3a;font-family:'Liberation Sans', sans-serif;font-size:15.9px;font-weight:normal;font-style:normal;letter-spacing:0.000px;white-space:pre;">,</span>
<span style="left:813px;top:380.10px;line-height:19.88px;color:#3a3a3a;font-family:'Liberation Sans', sans-serif;font-size:15.9px;font-weight:bold;font-style:normal;letter-spacing:-0.613px;white-space:pre;">Dec:</span>
<span style="left:849.7px;top:380.58px;line-height:20.62px;color:#555;font-family:'DejaVu Sans Mono', 'Liberation Mono', monospace;font-size:16.5px;font-weight:normal;font-style:normal;letter-spacing:0.000px;white-space:pre;">2000</span>
<span style="left:889.5px;top:380.10px;line-height:19.88px;color:#3a3a3a;font-family:'Liberation Sans', sans-serif;font-size:15.9px;font-weight:normal;font-style:normal;letter-spacing:0.000px;white-space:pre;">,</span>
<span style="left:897.3px;top:380.10px;line-height:19.88px;color:#3a3a3a;font-family:'Liberation Sans', sans-serif;font-size:15.9px;font-weight:bold;font-style:normal;letter-spacing:-0.274px;white-space:pre;">Oct:</span>
<span style="left:932.8px;top:380.58px;line-height:20.62px;color:#555;font-family:'DejaVu Sans Mono', 'Liberation Mono', monospace;font-size:16.5px;font-weight:normal;font-style:normal;letter-spacing:0.000px;white-space:pre;">03720</span>
<span style="left:688.5px;top:399.40px;line-height:19.88px;color:#3a3a3a;font-family:'Liberation Sans', sans-serif;font-size:15.9px;font-weight:bold;font-style:normal;letter-spacing:-0.723px;white-space:pre;">Bin:</span>
<span style="left:721.1px;top:399.78px;line-height:20.62px;color:#555;font-family:'DejaVu Sans Mono', 'Liberation Mono', monospace;font-size:16.5px;font-weight:normal;font-style:normal;letter-spacing:0.000px;white-space:pre;">0000,0000,0000,0000,0000,0111,1101,0000</span>
<span style="left:775.5px;top:501.68px;line-height:20.62px;color:#00d400;font-family:'DejaVu Sans Mono', 'Liberation Mono', monospace;font-size:16.5px;font-weight:normal;font-style:normal;letter-spacing:0.000px;white-space:pre;">root@dhcp0:~# ./testSymFile</span>
<span style="left:775.5px;top:519.98px;line-height:20.62px;color:#00d400;font-family:'DejaVu Sans Mono', 'Liberation Mono', monospace;font-size:16.5px;font-weight:normal;font-style:normal;letter-spacing:0.000px;white-space:pre;">=== My Debug example ===</span>
<span style="left:775.5px;top:538.28px;line-height:20.62px;color:#00d400;font-family:'DejaVu Sans Mono', 'Liberation Mono', monospace;font-size:16.5px;font-weight:normal;font-style:normal;letter-spacing:0.000px;white-space:pre;">4000</span>
<span style="left:1030.6px;top:44.64px;line-height:8.25px;color:#4a9ad8;font-family:'Liberation Sans', sans-serif;font-size:6.6px;font-weight:bold;font-style:normal;letter-spacing:0.232px;white-space:pre;">1010</span>
<span style="left:1030.6px;top:51.04px;line-height:8.25px;color:#4a9ad8;font-family:'Liberation Sans', sans-serif;font-size:6.6px;font-weight:bold;font-style:normal;letter-spacing:0.232px;white-space:pre;">0101</span>
<span style="left:1028px;top:168.44px;line-height:8.25px;color:#4a9ad8;font-family:'Liberation Sans', sans-serif;font-size:6.6px;font-weight:bold;font-style:normal;letter-spacing:0.232px;white-space:pre;">1010</span>
<span style="left:1028px;top:174.84px;line-height:8.25px;color:#4a9ad8;font-family:'Liberation Sans', sans-serif;font-size:6.6px;font-weight:bold;font-style:normal;letter-spacing:0.232px;white-space:pre;">0101</span>
<div style="left:1.6px;top:314.6px;width:684.4px;height:5.7px;background:#ffffff;"></div>
<div style="left:1.6px;top:314.6px;width:501.6px;height:5.7px;background:#f1f0ef;"></div>
<div style="left:1.6px;top:314.6px;width:684.4px;height:1px;background:#dcdad8;"></div>
</div></body></html>
